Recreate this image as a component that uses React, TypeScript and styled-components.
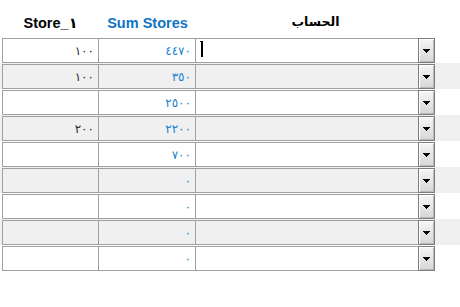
import React from "react";
import styled, { createGlobalStyle } from "styled-components";

const Global = createGlobalStyle`
  html, body { margin: 0; padding: 0; background: #ffffff; }
  body { font-family: "Liberation Sans", "DejaVu Sans", sans-serif; }
`;

const LINE = "#a0a0a0";

const Grid = styled.div`
  display: flex;
  flex-direction: column;
  width: 460px;
`;

const HeaderRow = styled.div`
  display: flex;
  height: 37px;
  padding-left: 2px;
`;

const HeadCell = styled.div<{ $w: number; $blue?: boolean; $arabic?: boolean }>`
  width: ${(p) => p.$w}px;
  box-sizing: border-box;
  text-align: center;
  padding-top: ${(p) => (p.$arabic ? 14 : 15)}px;
  font-family: ${(p) => (p.$arabic ? '"DejaVu Sans", sans-serif' : '"Liberation Sans", "DejaVu Sans", sans-serif')};
  font-weight: bold;
  font-size: ${(p) => (p.$arabic ? 12.5 : 14.5)}px;
  line-height: 16px;
  color: ${(p) => (p.$blue ? "#0f74c4" : "#000000")};
`;

const Row = styled.div<{ $alt: boolean }>`
  display: flex;
  padding: 1px 0 0 2px;
  height: 26px;
  box-sizing: border-box;
  background: ${(p) => (p.$alt ? "#f0f0f0" : "#ffffff")};
`;

const NumCell = styled.div<{ $w: number; $first?: boolean; $blue?: boolean }>`
  width: ${(p) => p.$w}px;
  height: 25px;
  box-sizing: border-box;
  border-top: 1px solid ${LINE};
  border-bottom: 1px solid ${LINE};
  border-right: 1px solid ${LINE};
  border-left: ${(p) => (p.$first ? `1px solid ${LINE}` : "none")};
  display: flex;
  align-items: center;
  justify-content: flex-end;
  padding-right: 4px;
  font-family: "DejaVu Sans", sans-serif;
  font-size: 12px;
  letter-spacing: 2.4px;
  color: ${(p) => (p.$blue ? "#1a7fd0" : "#2a2a2a")};
`;

const SelectCell = styled.div`
  position: relative;
  width: 239px;
  height: 25px;
  box-sizing: border-box;
  border-top: 1px solid ${LINE};
  border-bottom: 1px solid ${LINE};
  display: flex;
  justify-content: flex-end;
`;

const DropButton = styled.div`
  width: 17px;
  height: 25px;
  margin-top: -1px;
  box-sizing: border-box;
  border: 1px solid #7c7c7c;
  box-shadow: inset 1px 1px 0 #ffffff, inset -1px -1px 0 #b8b8b8;
  background: linear-gradient(#f6f6f6, #d6d6d6);
  display: flex;
  align-items: center;
  justify-content: center;
`;

const Caret = styled.span`
  position: absolute;
  left: 4px;
  top: 2px;
  width: 4px;
  height: 16px;
`;

const Arrow = () => (
  <svg width="7" height="4" viewBox="0 0 7 4">
    <path d="M0 0h7v1h-1v1h-1v1h-1v1h-1v-1h-1v-1h-1v-1h-1z" fill="#000" />
  </svg>
);

const rows: { store: string; sum: string }[] = [
  { store: "١٠٠", sum: "٤٤٧٠" },
  { store: "١٠٠", sum: "٣٥٠" },
  { store: "", sum: "٢٥٠٠" },
  { store: "٢٠٠", sum: "٢٢٠٠" },
  { store: "", sum: "٧٠٠" },
  { store: "", sum: "٠" },
  { store: "", sum: "٠" },
  { store: "", sum: "٠" },
  { store: "", sum: "٠" },
];

export default function App() {
  return (
    <>
      <Global />
      <Grid>
        <HeaderRow>
          <HeadCell $w={97}>Store_١</HeadCell>
          <HeadCell $w={97} $blue>Sum Stores</HeadCell>
          <HeadCell $w={239} $arabic>الحساب</HeadCell>
        </HeaderRow>
        {rows.map((r, i) => (
          <Row key={i} $alt={i % 2 === 1}>
            <NumCell $w={97} $first>{r.store}</NumCell>
            <NumCell $w={97} $blue>{r.sum}</NumCell>
            <SelectCell>
              {i === 0 && (
                <Caret>
                  <svg width="4" height="16" viewBox="0 0 4 16">
                    <rect x="1" y="0" width="2" height="16" fill="#000" />
                    <rect x="0" y="0" width="1" height="1" fill="#000" />
                  </svg>
                </Caret>
              )}
              <DropButton>
                <Arrow />
              </DropButton>
            </SelectCell>
          </Row>
        ))}
      </Grid>
    </>
  );
}
